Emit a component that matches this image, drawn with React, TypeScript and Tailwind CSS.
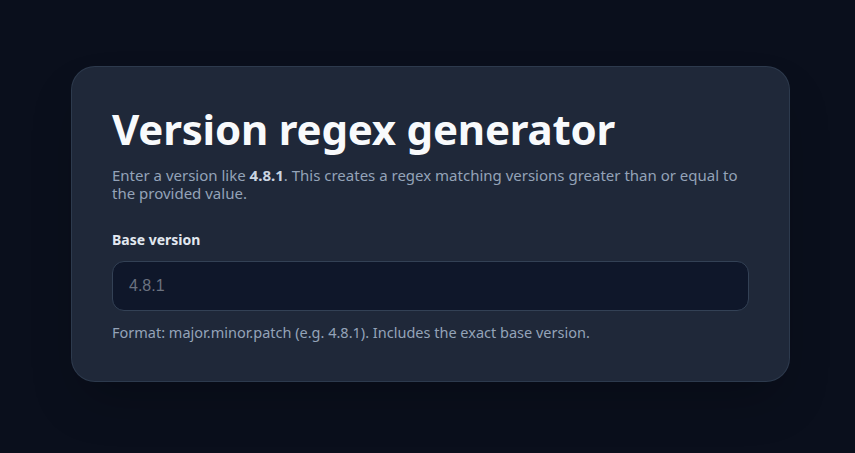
import { useState } from "react";

export default function App() {
  const [version, setVersion] = useState("");

  return (
    <div className="min-h-screen bg-[#0a0f1c] px-[71px] pt-[66px] font-['Noto_Sans',sans-serif]">
      <div className="w-[719px] rounded-[24px] border border-[#334155]/70 bg-[#1f2839] px-10 pb-10 pt-[34px] shadow-2xl">
        <h1 className="text-[42px] font-bold leading-[56px] tracking-[-0.2px] text-[#f8fafc]">
          Version regex generator
        </h1>
        <p className="mt-[9px] text-[15px] leading-[18px] text-[#94a3b8]">
          Enter a version like <strong className="font-bold text-[#cbd5e1]">4.8.1</strong>. This
          creates a regex matching versions greater than or equal to the provided value.
        </p>

        <label
          htmlFor="baseVersion"
          className="mt-[28px] block text-[14px] font-bold leading-[20px] text-[#e2e8f0]"
        >
          Base version
        </label>
        <input
          id="baseVersion"
          type="text"
          value={version}
          onChange={(e) => setVersion(e.target.value)}
          placeholder="4.8.1"
          className="mt-[11px] h-[50px] w-full rounded-[12px] border border-[#334155] bg-[#0f172a] px-4 font-['Liberation_Sans',sans-serif] text-[16px] text-[#e2e8f0] placeholder-[#6b7280] outline-none"
        />
        <p className="mt-[12px] text-[14.5px] leading-[18px] text-[#94a3b8]">
          Format: major.minor.patch (e.g. 4.8.1). Includes the exact base version.
        </p>
      </div>
    </div>
  );
}
